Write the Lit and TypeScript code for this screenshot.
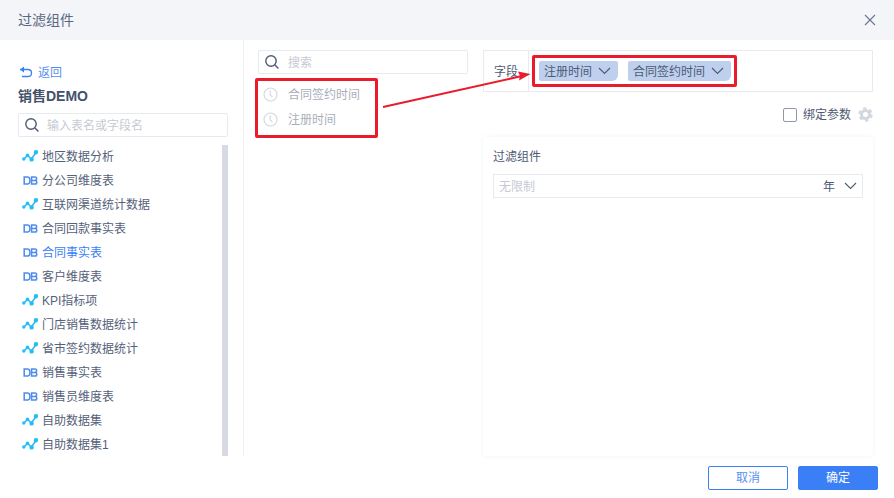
import { LitElement, html, css, svg } from 'lit';
import { customElement } from 'lit/decorators.js';

const tables: [string, string, boolean?][] = [
  ['地区数据分析', 'line'],
  ['分公司维度表', 'db'],
  ['互联网渠道统计数据', 'line'],
  ['合同回款事实表', 'db'],
  ['合同事实表', 'db', true],
  ['客户维度表', 'db'],
  ['KPI指标项', 'line'],
  ['门店销售数据统计', 'line'],
  ['省市签约数据统计', 'line'],
  ['销售事实表', 'db'],
  ['销售员维度表', 'db'],
  ['自助数据集', 'line'],
  ['自助数据集1', 'line'],
];

const searchIcon = html`<svg class="search-icon" width="16" height="16" viewBox="0 0 16 16" fill="none">
  <circle cx="7" cy="7" r="5.2" stroke="#4d5a73" stroke-width="1.4" />
  <path d="M11 11l3.400 3.400" stroke="#4d5a73" stroke-width="1.4" />
</svg>`;

const chevron = html`<svg width="13" height="8" viewBox="0 0 13 8" fill="none">
  <path d="M1 1l5.500 5.500L12 1" stroke="#4d5a73" stroke-width="1.1" />
</svg>`;

const clock = html`<svg width="15" height="15" viewBox="0 0 15 15" fill="none">
  <circle cx="7.500" cy="7.500" r="6.500" stroke="#d3d7e0" stroke-width="1.1" />
  <path d="M7.200 3.600v4.200l2.200 2.200" stroke="#d3d7e0" stroke-width="1.1" />
</svg>`;

const lineIcon = html`<svg width="16" height="12" viewBox="0 0 16 12" fill="none">
  <path d="M2 9l3.500-3.500L9.500 9 14 2.500" stroke="#2fb4ea" stroke-width="1.5" />
  <circle cx="1.800" cy="9" r="1.700" fill="#1fc1f2" />
  <circle cx="5.500" cy="5.300" r="1.700" fill="#1fc1f2" />
  <circle cx="9.600" cy="9.400" r="2.200" fill="#1fc1f2" />
  <circle cx="14" cy="2.200" r="2.200" fill="#1fc1f2" />
</svg>`;

const dbIcon = html`<svg width="15" height="9" viewBox="0 0 16 10" fill="none">
  <path d="M1 1h3.400c2 0 3 1.600 3 4s-1 4-3 4H1z" stroke="#4f8cf0" stroke-width="1.700" />
  <path d="M9.200 1h3.800c1.200 0 1.800.8 1.800 1.900S14.200 5 13 5H9.200h4.200c1 0 1.600.8 1.600 2s-.8 2-2 2H9.200z" stroke="#4f8cf0" stroke-width="1.700" />
</svg>`;

const gear = html`<svg width="15" height="15" viewBox="0 0 15 15" fill="none">
  <circle cx="7.500" cy="7.500" r="4" stroke="#d3d7de" stroke-width="3" />
  <circle cx="7.500" cy="7.500" r="6.200" stroke="#d3d7de" stroke-width="2" stroke-dasharray="3.400 3.100" />
</svg>`;

const undo = html`<svg width="14" height="12" viewBox="0 0 14 12" fill="none">
  <path d="M1 3.500h8c2 0 3.500 1.300 3.500 3.500S11 10.500 9 10.500H3" stroke="#3a7ff6" stroke-width="1.300" />
  <path d="M5 .5v6L1 3.500z" fill="#3a7ff6" />
</svg>`;

@customElement('app-root')
export class AppRoot extends LitElement {
  static styles = css`
    :host {
      display: block;
      position: relative;
      width: 894px;
      height: 498px;
      overflow: hidden;
      background: #fff;
      color: #4d5a73;
      font-family: 'Liberation Sans', 'Noto Sans CJK SC', sans-serif;
      font-size: 12px;
    }
    * {
      box-sizing: border-box;
    }
    /* the CJK glyphs sit a little low in their line box */
    .t {
      margin-bottom: 2px;
    }
    .header {
      height: 40px;
      background: #f3f5f9;
      display: flex;
      align-items: center;
      justify-content: space-between;
      padding: 0 18px;
      font-size: 14px;
      color: #5a6780;
    }
    .close {
      display: flex;
    }
    .main {
      height: 416px;
      display: flex;
    }
    .left {
      width: 244px;
      padding: 25px 15px 0 18px;
      border-right: 1px solid #eef0f4;
      display: flex;
      flex-direction: column;
    }
    .back {
      display: flex;
      align-items: center;
      gap: 5px;
      height: 14px;
      color: #5a8ff0;
      margin-left: 1px;
    }
    .title {
      font-size: 14px;
      font-weight: 700;
      color: #44516b;
      line-height: 20px;
      margin-top: 7px;
    }
    .search {
      height: 24px;
      border: 1px solid #e8eaef;
      border-radius: 2px;
      display: flex;
      align-items: center;
      padding-left: 5px;
      gap: 8px;
      color: #c6cad3;
    }
    .left .search {
      width: 210px;
      margin-top: 7px;
      gap: 7px;
    }
    .list-wrap {
      flex: 1;
      margin-top: 8px;
      width: 210px;
      display: flex;
      justify-content: space-between;
      overflow: hidden;
    }
    .list {
      padding-left: 4px;
      margin-top: -1px;
    }
    .row {
      height: 24px;
      display: flex;
      align-items: center;
      gap: 4px;
      white-space: nowrap;
      color: #55617a;
    }
    .row .ic {
      width: 16px;
      display: flex;
      justify-content: center;
    }
    .row.active {
      color: #3a7ff6;
    }
    .scrollbar {
      width: 6px;
      background: #d8dae3;
    }
    .middle {
      width: 225px;
      padding: 10px 0 0 14px;
    }
    .middle .search {
      width: 210px;
    }
    .fields {
      margin-top: 8px;
      padding-left: 5px;
    }
    .field {
      height: 25px;
      display: flex;
      align-items: center;
      gap: 10px;
      color: #a9aeba;
    }
    .right {
      width: 390px;
      margin-left: 14px;
      padding-top: 10px;
      display: flex;
      flex-direction: column;
    }
    .field-box {
      height: 42px;
      border: 1px solid #e8eaef;
      display: flex;
    }
    .field-label {
      width: 45px;
      border-right: 1px solid #e8eaef;
      display: flex;
      align-items: center;
      justify-content: center;
    }
    .tags {
      display: flex;
      align-items: center;
      gap: 10px;
      padding-left: 10px;
    }
    .tag {
      height: 20px;
      display: flex;
      align-items: center;
      gap: 6px;
      padding: 0 7px 0 5px;
      background: #bed0ee;
      border-radius: 2px 2px 6px 2px;
      color: #4d5a73;
    }
    .bind {
      height: 45px;
      display: flex;
      align-items: center;
      justify-content: flex-end;
      gap: 6px;
    }
    .checkbox {
      width: 14px;
      height: 14px;
      border: 1px solid #8f98a8;
      border-radius: 2px;
    }
    .bind svg {
      margin-left: 1px;
    }
    .card {
      flex: 1;
      border-radius: 2px;
      box-shadow: 0 0 5px rgba(90, 100, 130, 0.07);
      padding: 10px;
    }
    .card-title {
      line-height: 18px;
      margin-top: 1px;
    }
    .select {
      margin-top: 8px;
      height: 24px;
      border: 1px solid #e8eaef;
      display: flex;
      align-items: center;
      justify-content: space-between;
      padding: 0 5px;
      color: #c6cad3;
    }
    .unit {
      display: flex;
      align-items: center;
      gap: 9px;
      color: #4d5a73;
    }
    .footer {
      height: 42px;
      display: flex;
      justify-content: flex-end;
      gap: 10px;
      padding: 10px 16px 0 0;
    }
    .btn {
      width: 80px;
      height: 24px;
      padding-bottom: 1px;
      border-radius: 2px;
      border: 1px solid #3a7ff6;
      display: flex;
      align-items: center;
      justify-content: center;
      color: #5a8ff0;
    }
    .btn.primary {
      background: #3a7ff6;
      color: #fff;
    }
    .annotation {
      position: absolute;
      border: 3px solid #ea1c2c;
      border-radius: 2px;
      pointer-events: none;
    }
    .a-left {
      left: 255px;
      top: 78px;
      width: 123px;
      height: 60px;
    }
    .a-right {
      left: 532px;
      top: 55px;
      width: 205px;
      height: 32px;
    }
    .arrow {
      position: absolute;
      left: 0;
      top: 0;
      pointer-events: none;
    }
  `;

  render() {
    return html`
      <div class="header">
        <span class="t">过滤组件</span>
        <span class="close">
          <svg width="12" height="12" viewBox="0 0 12 12" fill="none">
            <path d="M1 1l10 10M11 1L1 11" stroke="#6b7a94" stroke-width="1.200" />
          </svg>
        </span>
      </div>
      <div class="main">
        <div class="left">
          <div class="back">${undo}<span class="t">返回</span></div>
          <div class="title">销售DEMO</div>
          <div class="search">${searchIcon}<span class="t">输入表名或字段名</span></div>
          <div class="list-wrap">
            <div class="list">
              ${tables.map(
                ([name, type, active]) => html`<div class="row ${active ? 'active' : ''}">
                  <span class="ic">${type === 'line' ? lineIcon : dbIcon}</span>
                  <span class="t">${name}</span>
                </div>`,
              )}
            </div>
            <div class="scrollbar"></div>
          </div>
        </div>
        <div class="middle">
          <div class="search">${searchIcon}<span class="t">搜索</span></div>
          <div class="fields">
            <div class="field">${clock}<span class="t">合同签约时间</span></div>
            <div class="field">${clock}<span class="t">注册时间</span></div>
          </div>
        </div>
        <div class="right">
          <div class="field-box">
            <div class="field-label"><span class="t">字段</span></div>
            <div class="tags">
              <div class="tag"><span class="t">注册时间</span>${chevron}</div>
              <div class="tag"><span class="t">合同签约时间</span>${chevron}</div>
            </div>
          </div>
          <div class="bind">
            <div class="checkbox"></div>
            <span class="t">绑定参数</span>
            ${gear}
          </div>
          <div class="card">
            <div class="card-title">过滤组件</div>
            <div class="select">
              <span class="t">无限制</span>
              <span class="unit"><span class="t">年</span>${chevron}</span>
            </div>
          </div>
        </div>
      </div>
      <div class="footer">
        <div class="btn"><span class="t">取消</span></div>
        <div class="btn primary"><span class="t">确定</span></div>
      </div>
      <div class="annotation a-left"></div>
      <div class="annotation a-right"></div>
      <svg class="arrow" width="894" height="498" fill="none">
        ${svg`<path d="M383 107L522 76" stroke="#ea1c2c" stroke-width="2" />
        <path d="M530.500 74L518 71.500 520 76 519 80.500z" fill="#ea1c2c" />`}
      </svg>
    `;
  }
}
